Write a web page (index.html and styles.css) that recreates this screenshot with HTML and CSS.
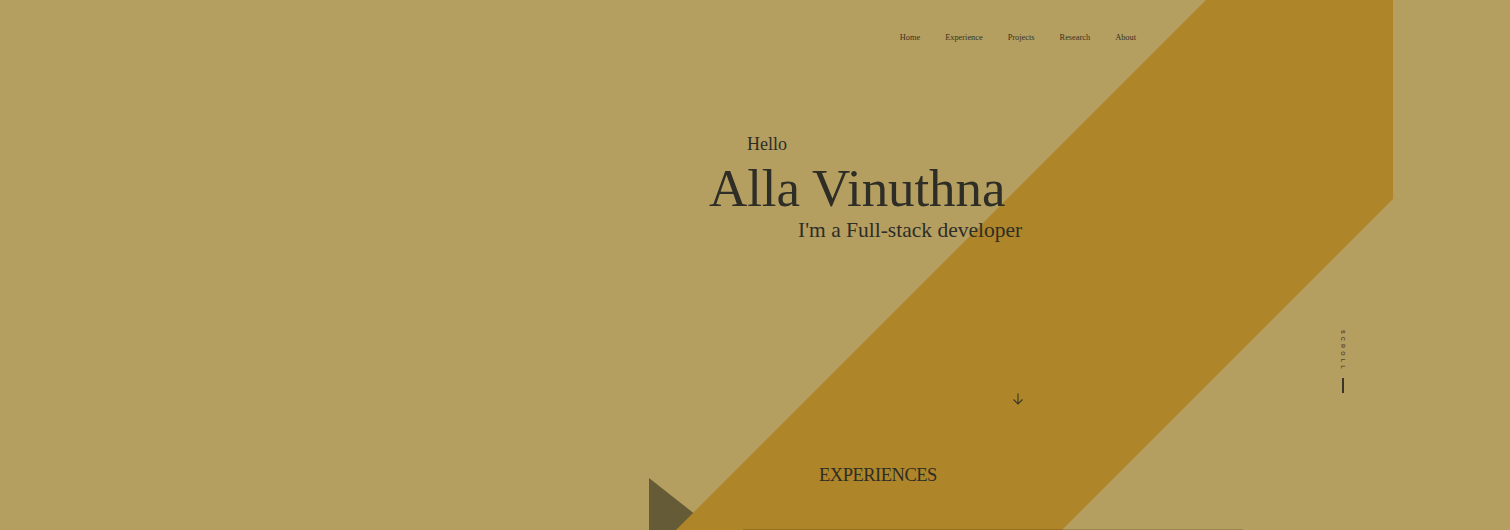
FILE: index.html
```html
<!DOCTYPE html>
<html lang="en">
<head>
<meta charset="utf-8">
<title>Alla Vinuthna</title>
<link rel="stylesheet" href="styles.css">
</head>
<body>
<svg class="backdrop" width="1510" height="530" viewBox="0 0 1510 530" aria-hidden="true">
  <polygon class="shard" points="649,478 649,530 715,530"></polygon>
  <polygon class="band" points="1206,0 1393,0 1393,199 1062,530 676,530"></polygon>
</svg>
<div class="page">
  <header class="nav">
    <a class="nav-link" href="#">Home</a>
    <a class="nav-link" href="#">Experience</a>
    <a class="nav-link" href="#">Projects</a>
    <a class="nav-link" href="#">Research</a>
    <a class="nav-link" href="#">About</a>
  </header>
  <main class="hero">
    <p class="hello">Hello</p>
    <h1 class="name">Alla Vinuthna</h1>
    <p class="role">I'm a Full-stack developer</p>
    <div class="down-arrow">
      <svg width="12" height="12" viewBox="0 0 12 12"><path d="M6 0.5 V11 M1.5 6.5 L6 11 L10.5 6.5" fill="none" stroke="#3b3624" stroke-width="1.1"/></svg>
    </div>
    <h2 class="section-title">EXPERIENCES</h2>
    <div class="card-edge"></div>
  </main>
</div>
<div class="scroll">
  <span class="scroll-text">SCROLL</span>
  <span class="scroll-line"></span>
</div>
</body>
</html>
```
FILE: styles.css
```css
html, body {
  margin: 0;
  padding: 0;
}
body {
  width: 1510px;
  height: 530px;
  overflow: hidden;
  position: relative;
  background: #b59f60;
  font-family: "Liberation Serif", "DejaVu Serif", serif;
  color: #2e2d26;
}
.backdrop {
  position: absolute;
  left: 0;
  top: 0;
  z-index: 0;
}
.band { fill: #ae8529; }
.shard { fill: #655b36; }
.page {
  position: relative;
  z-index: 1;
}
.nav {
  height: 74px;
  display: flex;
  justify-content: flex-end;
  align-items: center;
  gap: 25px;
  padding-right: 374px;
}
.nav-link {
  font-size: 8.35px;
  color: #36321f;
  text-decoration: none;
}
.hero {
  padding-left: 709px;
  display: flex;
  flex-direction: column;
  align-items: flex-start;
}
.hello {
  margin: 61px 0 0 38px;
  font-size: 18px;
  line-height: 1;
}
.name {
  margin: 9px 0 0 0;
  font-size: 53px;
  font-weight: normal;
  line-height: 1;
  letter-spacing: -0.1px;
}
.role {
  margin: 5px 0 0 89px;
  font-size: 21.5px;
  line-height: 1;
}
.down-arrow {
  margin: 151px 0 0 303px;
  width: 12px;
  height: 12px;
  display: flex;
}
.section-title {
  margin: 61px 0 0 110px;
  font-size: 18.5px;
  font-weight: normal;
  line-height: 1;
  letter-spacing: -0.5px;
}
.card-edge {
  margin: 45px 0 0 34px;
  width: 500px;
  height: 2px;
  background: rgba(50, 35, 10, 0.2);
}
.scroll {
  position: absolute;
  left: 1340px;
  top: 330px;
  z-index: 2;
  display: flex;
  flex-direction: column;
  align-items: center;
  gap: 6px;
}
.scroll-text {
  writing-mode: vertical-rl;
  font-family: "Liberation Sans", sans-serif;
  font-size: 5.5px;
  font-weight: bold;
  letter-spacing: 3.2px;
  color: #4a4530;
}
.scroll-line {
  width: 2px;
  height: 15px;
  background: #3a3626;
}
```
